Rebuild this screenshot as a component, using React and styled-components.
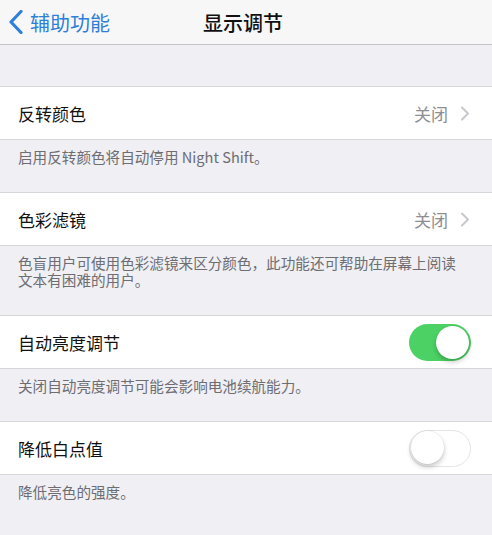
import styled, { createGlobalStyle } from 'styled-components'

const Global = createGlobalStyle`
  html, body {
    margin: 0;
    padding: 0;
    background: #efeff4;
    font-family: "Noto Sans CJK SC", "Noto Sans", sans-serif;
    -webkit-font-smoothing: antialiased;
  }
`

const Screen = styled.div`
  width: 492px;
  height: 535px;
  overflow: hidden;
  background: #efeff4;
`

const NavBar = styled.div`
  position: relative;
  height: 44px;
  background: #f7f7f8;
  border-bottom: 1px solid #c4c4c8;
  display: flex;
  align-items: center;
  justify-content: center;
`

const Back = styled.div`
  position: absolute;
  left: 8px;
  top: 0;
  bottom: 0;
  display: flex;
  align-items: center;
  gap: 6px;
  color: #2f7ed8;
  font-size: 20px;
`

const Title = styled.div`
  font-size: 20px;
  font-weight: 500;
  color: #111;
  margin-left: -6px;
`

const Spacer = styled.div`
  height: 41px;
`

const Cell = styled.div`
  height: 52px;
  background: #fff;
  border-top: 1px solid #d6d6da;
  border-bottom: 1px solid #d6d6da;
  display: flex;
  align-items: center;
  padding: 0 22px 0 18px;
`

const Label = styled.div`
  flex: 1;
  font-size: 17px;
  color: #111;
`

const Value = styled.div`
  font-size: 17px;
  color: #8e8e93;
  margin-right: 12px;
`

const Footer = styled.div`
  padding: 8px 26px 27px 18px;
  font-size: 14.6px;
  line-height: 17px;
  color: #6d6d72;
`

const Switch = styled.div`
  position: relative;
  width: 62px;
  height: 37px;
  box-sizing: border-box;
  border-radius: 19px;
  margin-right: -1px;
  background: ${({ on }) => (on ? '#4cd264' : '#fff')};
  border: ${({ on }) => (on ? 'none' : '1.5px solid #e4e4e8')};
`

const Knob = styled.div`
  position: absolute;
  top: ${({ on }) => (on ? '2px' : '0.5px')};
  left: ${({ on }) => (on ? '27px' : '0.5px')};
  width: 33px;
  height: 33px;
  border-radius: 50%;
  background: #fff;
  box-shadow: 0 3px 5px rgba(0, 0, 0, 0.22), 0 0 0 0.5px rgba(0, 0, 0, 0.06);
`

const BackChevron = () => (
  <svg width="16" height="24" viewBox="0 0 16 24">
    <path d="M13 1.5 L3 12 L13 22.5" fill="none" stroke="#2f7ed8" strokeWidth="3.2" strokeLinecap="round" strokeLinejoin="round" />
  </svg>
)

const Disclosure = () => (
  <svg width="10" height="15" viewBox="0 0 10 15">
    <path d="M2 1.5 L8 7.5 L2 13.5" fill="none" stroke="#c7c7cc" strokeWidth="2" strokeLinecap="round" strokeLinejoin="round" />
  </svg>
)

const Toggle = ({ on }) => (
  <Switch on={on}>
    <Knob on={on} />
  </Switch>
)

const sections = [
  { label: '反转颜色', value: '关闭', note: '启用反转颜色将自动停用 Night Shift。' },
  { label: '色彩滤镜', value: '关闭', note: '色盲用户可使用色彩滤镜来区分颜色，此功能还可帮助在屏幕上阅读文本有困难的用户。' },
  { label: '自动亮度调节', toggle: true, on: true, note: '关闭自动亮度调节可能会影响电池续航能力。' },
  { label: '降低白点值', toggle: true, on: false, note: '降低亮色的强度。' },
]

export default function App() {
  return (
    <Screen>
      <Global />
      <NavBar>
        <Back>
          <BackChevron />
          辅助功能
        </Back>
        <Title>显示调节</Title>
      </NavBar>
      <Spacer />
      {sections.map((s, i) => (
        <div key={i}>
          <Cell>
            <Label>{s.label}</Label>
            {s.toggle ? (
              <Toggle on={s.on} />
            ) : (
              <>
                <Value>{s.value}</Value>
                <Disclosure />
              </>
            )}
          </Cell>
          <Footer>{s.note}</Footer>
        </div>
      ))}
    </Screen>
  )
}
